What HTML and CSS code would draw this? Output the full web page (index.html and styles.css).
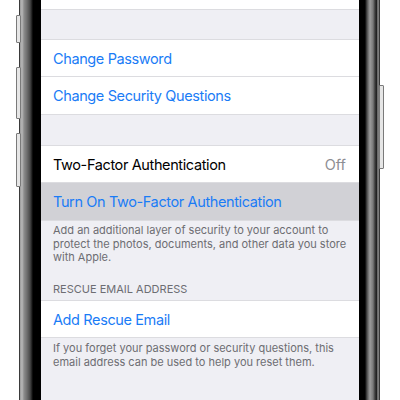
FILE: index.html
```html
<!DOCTYPE html>
<html>
<head>
<meta charset="utf-8">
<link rel="stylesheet" href="styles.css">
</head>
<body>
<div class="stage">
  <div class="side left">
    <span class="btn b1"></span>
    <span class="btn b2"></span>
    <span class="btn b3"></span>
  </div>
  <div class="screen">
    <div class="cell top"></div>
    <div class="gap g1"></div>
    <div class="group">
      <div class="row link inset">Change Password</div>
      <div class="row link">Change Security Questions</div>
    </div>
    <div class="gap g2"></div>
    <div class="group">
      <div class="row inset"><span>Two-Factor Authentication</span><span class="value">Off</span></div>
      <div class="row link active">Turn On Two-Factor Authentication</div>
    </div>
    <div class="footer f1">Add an additional layer of security to your account to protect the photos, documents, and other data you store with Apple.</div>
    <div class="header">RESCUE EMAIL ADDRESS</div>
    <div class="group">
      <div class="row link">Add Rescue Email</div>
    </div>
    <div class="footer f2">If you forget your password or security questions, this email address can be used to help you reset them.</div>
  </div>
  <div class="side right">
    <span class="btn b4"></span>
  </div>
</div>
</body>
</html>
```
FILE: styles.css
```css
html, body {
  margin: 0;
  padding: 0;
  background: #ffffff;
}
body {
  width: 400px;
  height: 400px;
  overflow: hidden;
  font-family: "Inter", "Noto Sans", sans-serif;
}
.stage {
  display: flex;
  height: 400px;
  padding-left: 19px;
}
.side {
  position: relative;
  width: 22px;
  height: 400px;
  flex: none;
}
.side.left {
  background: linear-gradient(to right,
    #3a3a3a 0, #3a3a3a 1px,
    #9a9a9a 1px, #b8b8b8 3px,
    #8c8c8c 5px, #6e6e6e 8px,
    #4a4a4a 11px, #1c1c1c 13px,
    #000 14px, #000 22px);
}
.side.right {
  width: 21px;
  background: linear-gradient(to right,
    #000 0, #000 6px,
    #2a2a2a 7px, #6a6a6a 9px,
    #9c9c9c 11px, #7a7a7a 14px,
    #3c3c3c 16px, #1a1a1a 18px,
    #bdbdbd 19px, #3a3a3a 20px, #3a3a3a 21px);
}
.btn {
  position: absolute;
  width: 3px;
  border: 1px solid #7a7a7a;
  background: #e6e6e6;
  border-radius: 1px;
}
.b1 { left: -3px; top: 15px; height: 26px; }
.b2 { left: -3px; top: 67px; height: 50px; }
.b3 { left: -3px; top: 133px; height: 52px; }
.b4 { right: -4px; top: 85px; height: 82px; }

.screen {
  width: 318px;
  flex: none;
  background: #efeff4;
  display: flex;
  flex-direction: column;
}
.cell.top {
  height: 9px;
  background: #fff;
  border-bottom: 1px solid #dcdce0;
}
.gap.g1 { height: 29px; }
.gap.g2 { height: 30px; }
.group {
  background: #fff;
  border-top: 1px solid #dcdce0;
  border-bottom: 1px solid #dcdce0;
}
.row {
  height: 36px;
  padding: 0 13px 0 12px;
  display: flex;
  align-items: center;
  justify-content: space-between;
  font-size: 14.5px;
  letter-spacing: -0.38px;
  color: #000;
  position: relative;
}
.row.inset { border-bottom: 1px solid #dcdce0; height: 36px; }
.row.inset + .row { height: 37px; }
.row.link { color: #1a7cf6; }
.row.active { background: #d1d1d6; }
.value { color: #8e8e93; letter-spacing: 0; }
.footer {
  padding: 4px 10px 0 12px;
  font-size: 11px;
  line-height: 13.6px;
  color: #6d6d72;
}
.footer.f1 { height: 58px; padding-top: 3px; }
.header {
  padding: 0 12px;
  font-size: 11px;
  color: #6d6d72;
  height: 18px;
  line-height: 14px;
}
```
